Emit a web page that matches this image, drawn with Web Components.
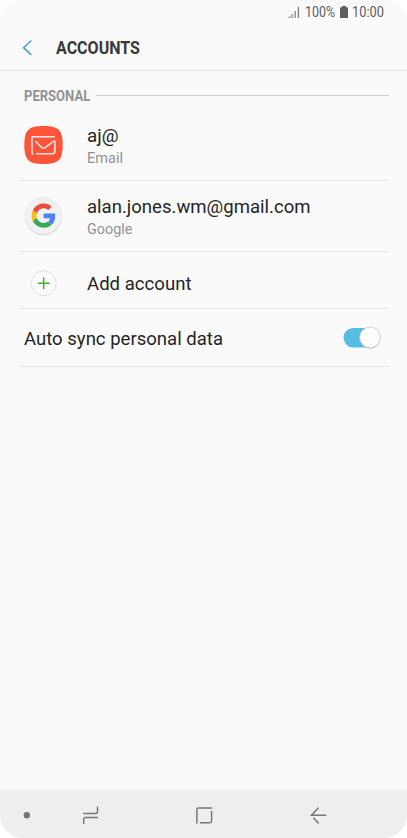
<!DOCTYPE html>
<html lang="en">
<head>
<meta charset="utf-8">
<title>Accounts</title>
<style>
html,body{margin:0;background:#fff}
body{font-family:Roboto,"Liberation Sans",sans-serif}
</style>
</head>
<body>
<accounts-screen></accounts-screen>
<script>
const define = (name, html, setup) => customElements.define(name, class extends HTMLElement {
  constructor() {
    super();
    const t = document.createElement('template');
    t.innerHTML = html;
    this.attachShadow({ mode: 'open' }).append(t.content.cloneNode(true));
  }
  connectedCallback() { if (setup) setup(this); }
});

// Text squeezed horizontally to the width given in the "w" attribute.
define('fit-text', `<style>
:host{display:block;flex:none;white-space:nowrap}
span{display:inline-block;transform-origin:0 50%}
</style><span><slot></slot></span>`, el => {
  const w = parseFloat(el.getAttribute('w'));
  const s = el.shadowRoot.querySelector('span');
  s.style.transform = 'none';
  const natural = s.getBoundingClientRect().width;
  el.style.width = w + 'px';
  if (natural) s.style.transform = `scaleX(${w / natural})`;
});

define('status-bar', `<style>
:host{display:flex;box-sizing:border-box;height:26px;padding-left:288px;align-items:center;color:#606060;font-size:14.500px;line-height:26px}
svg{display:block;flex:none}
.p{margin-left:5px}.b{margin-left:4.500px}.t{margin-left:4px}
</style>
<svg width="12" height="26" viewBox="0 0 12 26" fill="#858585"><path d="M0 18l2.300-2.200V18zM3.500 14h1.300v4H3.500zM6.500 11h1.300v7H6.500zM9.700 7h1.400v11H9.700z"/></svg>
<fit-text class="p" w="30.300">100%</fit-text>
<svg class="b" width="8" height="26" viewBox="0 0 8 26" fill="#606060"><path d="M2 6h4v1.300h2V18H0V7.300h2z"/></svg>
<fit-text class="t" w="32">10:00</fit-text>`);

define('title-bar', `<style>
:host{display:flex;box-sizing:border-box;height:45px;padding-left:22px;align-items:center;border-bottom:1px solid #e5e5e5;color:#383838;font-size:19px;font-weight:700;line-height:44px}
svg{display:block;margin-right:22.500px}
</style>
<svg width="11" height="44" viewBox="0 0 11 44"><path d="M9.300 14.500L1.600 21.700l7.700 7.200" fill="none" stroke="#45a5c8" stroke-width="1.600"/></svg>
<fit-text w="84"><slot></slot></fit-text>`);

define('section-header', `<style>
:host{display:flex;height:38px;padding:6px 18px 0 23.600px;box-sizing:border-box;align-items:flex-start;color:#929292;font-size:15px;font-weight:700;line-height:39px}
i{height:1px;flex:1;background:#cecece;margin:18px 0 0 6.200px}
</style><fit-text w="66.200"><slot></slot></fit-text><i></i>`);

define('setting-row', `<style>
:host{display:flex;box-sizing:border-box;margin:0 18px;border-bottom:1px solid #e7e7e7;align-items:center;color:#252525;font-size:19.200px;line-height:24px}
.icon{width:69px;flex:none;display:flex}
.text{flex:1}
:host([plain]) .icon{display:none}
:host([plain]) .text{padding:1px 0 0 5.500px}
::slotted([slot=sub]){color:#929292;font-size:14.500px;line-height:18px;margin:2px 0 -2px}
</style><div class="icon"><slot name="icon"></slot></div>
<div class="text"><slot></slot><slot name="sub"></slot></div><slot name="end"></slot>`);

const iconStyle = '<style>:host{display:block;width:51px}svg{display:block;overflow:visible}</style>';
define('email-icon', iconStyle + `<svg width="51" height="40" viewBox="0 0 51 40">
<path d="M25.500 1C40.500 1 44.700 5 44.700 20S40.500 39 25.500 39 6.300 35 6.300 20 10.500 1 25.500 1z" fill="#fe553a"/>
<path d="M36.800 11.700H14V28.700H15.500M18 28.700H34.200q2.700 0 2.700-2.700V16.300Q36.900 15.200 36 16L27 22.700q-1.500 1-3 0L17.500 16.300" fill="none" stroke="#ffe9e4" stroke-width="1.500" stroke-linejoin="round"/></svg>`);

define('google-icon', iconStyle + `<svg width="51" height="40" viewBox="0 0 51 40">
<circle cx="25.500" cy="21" r="18.300" fill="#cfcfcf"/><circle cx="25.500" cy="20" r="18.500" fill="#f1f1f1" stroke="#e3e3e3" stroke-width=".6"/>
<g transform="translate(13.500 7.500) scale(.505)">
<path fill="#ea4f40" d="M24 9.500c3.540 0 6.710 1.220 9.210 3.600l6.850-6.850C35.900 2.380 30.470 0 24 0 14.620 0 6.510 5.380 2.560 13.220l7.980 6.190C12.430 13.720 17.740 9.500 24 9.500z"/>
<path fill="#4b86ee" d="M46.980 24.550c0-1.570-.15-3.090-.38-4.550H24v9.020h12.940c-.58 2.960-2.260 5.480-4.780 7.180l7.730 6c4.510-4.180 7.090-10.360 7.090-17.650z"/>
<path fill="#fabb12" d="M10.530 28.590c-.48-1.450-.76-2.990-.76-4.590s.27-3.140.76-4.590l-7.980-6.190C.92 16.460 0 20.120 0 24c0 3.880.92 7.540 2.560 10.780l7.970-6.190z"/>
<path fill="#39a857" d="M24 48c6.480 0 11.930-2.130 15.890-5.810l-7.730-6c-2.150 1.450-4.920 2.300-8.160 2.300-6.260 0-11.570-4.220-13.470-9.910l-7.980 6.190C6.510 42.620 14.620 48 24 48z"/></g></svg>`);

define('add-icon', iconStyle + `<svg width="51" height="28" viewBox="0 0 51 28">
<circle cx="25.700" cy="13.200" r="12.500" fill="#fcfcfc" stroke="#dedede"/>
<path d="M19.800 13.200h12M25.700 7.200v12" stroke="#41b431" stroke-width="1.500"/></svg>`);

define('toggle-switch', `<style>:host{display:block}svg{display:block;overflow:visible}</style>
<svg width="45" height="24" viewBox="0 0 45 24"><rect x="-.500" y="2" width="34" height="19.500" rx="9.750" fill="#56bde2"/>
<circle cx="26.100" cy="12" r="10.600" fill="#b6b6b6"/><circle cx="26.100" cy="11.400" r="10.400" fill="#fdfdfd" stroke="#c9c9c9" stroke-width=".7"/></svg>`);

define('nav-bar', `<style>:host{display:block;height:48px;background:#eee}svg{display:block}</style>
<svg width="407" height="48" viewBox="0 790 407 48" fill="none" stroke="#777" stroke-width="1.500">
<circle cx="26.800" cy="815.300" r="3.200" fill="#777" stroke="none"/>
<path d="M83.200 813.400H95.700q1.800 0 1.800-1.800V806.500M98 817.400H85.500q-1.800 0-1.800 1.800V824"/>
<path d="M212.300 807.900H198.600q-1.700 0-1.700 1.700V823.500M200 822.700H209.900q1.700 0 1.700-1.700V811"/>
<path d="M326.200 815.300H311.500L318.700 807.500M313.300 817.700L318.700 823.400"/></svg>`);

define('accounts-screen', `<style>
:host{display:flex;flex-direction:column;width:407px;height:838px;background:#fafafa;border-radius:23px;overflow:hidden}
main{flex:1}
.a{height:72px}.b{height:71px}.c{height:57px;padding-top:7px}.d{height:58px;padding-top:1px}
</style>
<status-bar></status-bar><title-bar>ACCOUNTS</title-bar>
<main>
<section-header>PERSONAL</section-header>
<setting-row class="a"><email-icon slot="icon"></email-icon><fit-text w="31.500">aj@</fit-text><fit-text slot="sub" w="36">Email</fit-text></setting-row>
<setting-row class="b"><google-icon slot="icon"></google-icon><fit-text w="223.500">alan.jones.wm@gmail.com</fit-text><fit-text slot="sub" w="45.500">Google</fit-text></setting-row>
<setting-row class="c"><add-icon slot="icon"></add-icon><fit-text w="104.500">Add account</fit-text></setting-row>
<setting-row class="d" plain><fit-text w="199">Auto sync personal data</fit-text><toggle-switch slot="end"></toggle-switch></setting-row>
</main>
<nav-bar></nav-bar>`);
</script>
</body>
</html>
